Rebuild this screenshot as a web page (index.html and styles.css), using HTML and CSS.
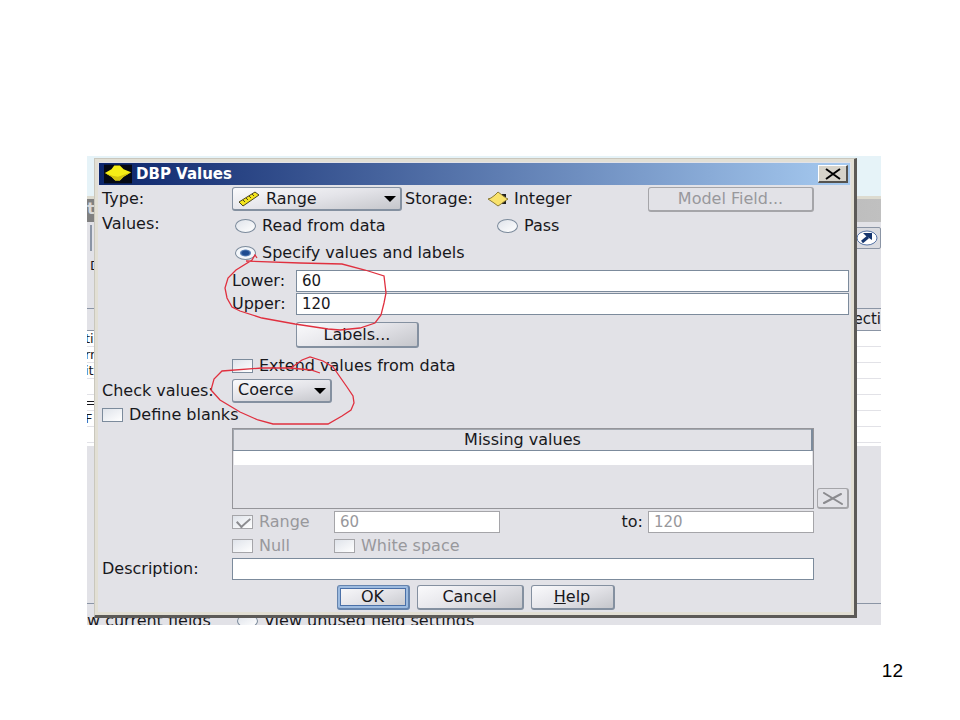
FILE: index.html
```
<!DOCTYPE html>
<html lang="en">

<head>
    <meta charset="UTF-8">
    <meta name="viewport" content="width=device-width, initial-scale=1.0">
    <title>DBP Values</title>
    <link rel="stylesheet" href="styles.css">
</head>

<body>
    <main class="slide">
        <div class="shot">
            <!-- Window behind the dialog -->
            <div class="parent">
                <div class="parent-sky"></div>
                <div class="parent-title"><span>t</span></div>
                <div class="parent-toolbar">
                    <span class="tool-edge"></span>
                    <button class="tool" aria-label="Open">
                        <svg width="24" height="16" viewBox="0 0 24 16">
                            <ellipse cx="11" cy="8" rx="10" ry="7" fill="#fff" stroke="#5573a5" />
                            <path d="M6 12L12 7" fill="none" stroke="#16366f" stroke-width="3" />
                            <path d="M7 3H16V10L13 8L10 6Z" fill="#16366f" />
                        </svg>
                    </button>
                </div>
                <div class="parent-label">D</div>
                <div class="parent-head">ecti</div>
                <div class="parent-rows">
                    <span>ti</span>
                    <span>rr</span>
                    <span>it</span>
                    <span></span>
                    <span>=</span>
                    <span>F</span>
                    <span></span>
                </div>
                <div class="parent-space"></div>
                <div class="parent-view">
                    <span class="parent-current">w current fields</span>
                    <label class="option"><input type="radio" name="view">View unused field settings</label>
                </div>
            </div>

            <section class="dialog">
                <header class="titlebar">
                    <svg class="logo" width="28" height="20" viewBox="0 0 30 20">
                        <rect width="30" height="20" fill="#050914" />
                        <path d="M1 9L8 5L11 1H17L21 5L29 8L21 13L17 17H12L8 13Z" fill="#f5ee16" />
                        <path d="M1 9L9 12L15 13L29 8L21 13L17 17H12L8 13Z" fill="#d3c40e" />
                    </svg>
                    <h1>DBP Values</h1>
                    <button class="close" aria-label="Close">
                        <svg width="18" height="12" viewBox="0 0 18 12">
                            <path d="M2 1L16 11M16 1L2 11" stroke="#000" stroke-width="2" />
                        </svg>
                    </button>
                </header>

                <form class="form">
                    <div class="row row-type">
                        <label class="name" for="type">Type:</label>
                        <div class="select select-type">
                            <svg class="ruler" width="22" height="16" viewBox="0 0 22 16">
                                <path d="M1 11L17 1L21 4L5 15Z" fill="#f4e51b" stroke="#4b4520" />
                                <path d="M5 9l2 2M8 7l2 2M11 5l2 2M14 3l2 2" stroke="#4b4520" />
                            </svg>
                            <select id="type">
                                <option>Range</option>
                            </select>
                            <svg class="arrow" width="12" height="6" viewBox="0 0 12 6"><path d="M0 0H12L6 6Z" /></svg>
                        </div>
                        <span class="storage">Storage:</span>
                        <svg class="diamond" width="22" height="16" viewBox="0 0 22 16">
                            <path d="M15 3h4v3h-4zM15 10h4v3h-4z" fill="#222" />
                            <path d="M1 8L4 7L8 4L11 1L15 4L19 7L21 8L18 10L14 13L11 15L7 12L4 10Z" fill="#f9e36c" stroke="#8b7a35" />
                        </svg>
                        <span>Integer</span>
                        <button type="button" class="btn btn-model" disabled>Model Field...</button>
                    </div>

                    <div class="row row-radio">
                        <span class="name name-values">Values:</span>
                        <label class="option option-read"><input type="radio" name="values">Read from data</label>
                        <label class="option"><input type="radio" name="values">Pass</label>
                    </div>
                    <div class="row row-specify">
                        <label class="option"><input type="radio" name="values" checked>Specify values and labels</label>
                    </div>

                    <div class="row row-bound">
                        <label class="bound" for="lower">Lower:</label>
                        <input class="text" type="text" id="lower" value="60">
                    </div>
                    <div class="row row-bound">
                        <label class="bound" for="upper">Upper:</label>
                        <input class="text" type="text" id="upper" value="120">
                    </div>
                    <div class="row row-labels">
                        <button type="button" class="btn btn-labels">Labels...</button>
                    </div>

                    <div class="row row-extend">
                        <label class="option"><input type="checkbox">Extend values from data</label>
                    </div>
                    <div class="row row-check">
                        <label class="name" for="check">Check values:</label>
                        <div class="select select-check">
                            <select id="check">
                                <option>Coerce</option>
                            </select>
                            <svg class="arrow" width="12" height="6" viewBox="0 0 12 6"><path d="M0 0H12L6 6Z" /></svg>
                        </div>
                    </div>
                    <div class="row row-blanks">
                        <label class="option"><input type="checkbox">Define blanks</label>
                    </div>

                    <div class="row row-missing">
                        <div class="missing">
                            <table>
                                <thead>
                                    <tr><th>Missing values</th></tr>
                                </thead>
                                <tbody>
                                    <tr><td></td></tr>
                                </tbody>
                            </table>
                        </div>
                        <button type="button" class="btn btn-delete" aria-label="Delete" disabled>
                            <svg width="22" height="13" viewBox="0 0 22 13">
                                <path d="M2 1L20 12M19 2L2 11" stroke="#8b8b8f" stroke-width="2" stroke-linecap="round" />
                            </svg>
                        </button>
                    </div>

                    <div class="row row-range">
                        <label class="option option-range disabled"><input type="checkbox" checked disabled>Range</label>
                        <input class="text" type="text" value="60" aria-label="From" disabled>
                        <label class="to" for="rangeTo">to:</label>
                        <input class="text" type="text" id="rangeTo" value="120" disabled>
                    </div>
                    <div class="row row-null">
                        <label class="option option-range disabled"><input type="checkbox" disabled>Null</label>
                        <label class="option disabled"><input type="checkbox" disabled>White space</label>
                    </div>
                    <div class="row row-description">
                        <label class="name" for="description">Description:</label>
                        <input class="text" type="text" id="description">
                    </div>

                    <div class="actions">
                        <button type="button" class="btn btn-ok">OK</button>
                        <button type="button" class="btn btn-cancel">Cancel</button>
                        <button type="button" class="btn btn-help"><u>H</u>elp</button>
                    </div>
                </form>
            </section>

            <!-- Red pen marks -->
            <svg class="marks" width="794" height="469" viewBox="87 156 794 469">
                <path d="M246 261L300 263L342 264L365 270L384 276L386 293L384 303L381 315L375 323L360 328L340 330L328 329L295 324L262 318L240 311L232 307L227 298L225 288L228 278L236 270L252 260L255 255L257 258" />
                <path d="M320 373L311 370L290 368L262 368L222 371L214 379L211 390L220 400L240 412L258 420L273 424L328 424L342 416L351 410L354 403L353 396L347 387L340 377L333 367L323 361L310 357L302 360L291 368" />
            </svg>
        </div>
        <footer class="page-number">12</footer>
    </main>
</body>

</html>
```
FILE: styles.css
```
* {
    box-sizing: border-box;
}

body {
    margin: 0;
    background: #fff;
    color: #18181c;
    font-family: "DejaVu Sans", Verdana, sans-serif;
    font-size: 16px;
    line-height: 20px;
}

.slide {
    padding: 156px 0 0 87px;
}

.shot {
    position: relative;
    display: grid;
    margin-right: 79px;
    overflow: hidden;
}

.parent,
.dialog {
    grid-area: 1 / 1;
    min-width: 0;
}

/* Window behind the dialog */
.parent {
    display: flex;
    flex-direction: column;
    background: #e2e2e7;
}

.parent-sky {
    height: 43px;
    background: #e6f3f8;
    border-bottom: 3px solid #dddbd0;
}

.parent-title {
    height: 23px;
    background: linear-gradient(90deg, #808080, #c0c0c0);
    color: #d8d8d8;
    font-weight: bold;
}

.parent-toolbar {
    display: flex;
    justify-content: space-between;
    align-items: center;
    height: 32px;
}

.tool-edge {
    height: 26px;
    margin-left: 3px;
    border-left: 2px solid #8b95a5;
}

.tool {
    height: 22px;
    padding: 0;
    border: 1px solid #8b95a5;
    border-radius: 2px;
    background: #dadbe0;
}

.tool svg {
    display: block;
}

.parent-label {
    height: 55px;
    padding: 2px 0 0 3px;
    border-bottom: 1px solid #8b95a5;
    font-size: 13px;
}

.parent-head {
    height: 22px;
    border-bottom: 1px solid #8b95a5;
    font-size: 15px;
    text-align: right;
}

.parent-rows {
    display: flex;
    flex-direction: column;
    height: 115px;
    background: #fff;
    font-size: 13px;
    line-height: 15px;
    text-indent: -2px;
}

.parent-rows span {
    height: 16px;
    border-bottom: 1px solid #e2e2e7;
}

.parent-space {
    flex: 1;
    border-bottom: 1px solid #8b95a5;
}

.parent-view {
    display: flex;
    align-items: flex-start;
    height: 21px;
    padding-top: 7px;
}

.parent-current {
    width: 150px;
}

/* Dialog */
.dialog {
    margin: 2px 24px 7px 7px;
    padding: 4px 2px 5px 4px;
    border: 1px solid #c9c7bd;
    border-right: 3px solid #5c5a57;
    border-bottom: 3px solid #5c5a57;
    background: #e2e2e7;
    box-shadow: inset 0 0 0 3px #e2dfd4;
}

.titlebar {
    display: flex;
    align-items: center;
    height: 22px;
    margin-right: 2px;
    padding-right: 2px;
    background: linear-gradient(90deg, #0c256b, #a6caf0);
}

.logo {
    margin: 0 4px 0 5px;
}

.titlebar h1 {
    margin: 0;
    color: #fff;
    font-size: 15px;
}

.close {
    display: flex;
    align-items: center;
    justify-content: center;
    width: 30px;
    height: 18px;
    margin-left: auto;
    padding: 0;
    border: 1px solid #fff;
    border-right: 2px solid #55534f;
    border-bottom: 2px solid #55534f;
    background: #d6d3ca;
}

.form {
    padding: 1px 3px 0;
}

.row {
    display: flex;
    align-items: center;
    white-space: nowrap;
}

.name {
    flex: none;
    width: 130px;
}

.text {
    flex: 1;
    min-width: 0;
    height: 22px;
    padding: 0 5px;
    border: 1px solid #7c8b9c;
    background: #fff;
    color: inherit;
    font: inherit;
    font-size: 15px;
}

.text:disabled {
    border-color: #a5a5a9;
    color: #98989c;
}

.btn {
    height: 25px;
    padding: 0;
    border: 1px solid #8490a0;
    border-right-width: 2px;
    border-bottom-width: 2px;
    border-radius: 3px;
    background: linear-gradient(160deg, #fafafc, #e4e4e9 50%, #c5c6cb);
    color: inherit;
    font: inherit;
}

.btn:disabled {
    border-color: #a5a5a9;
    background: none;
    color: #98989c;
}

/* Drop-downs */
.select {
    position: relative;
}

.select select {
    display: block;
    width: 100%;
    height: 24px;
    padding: 0 5px;
    border: 1px solid #8490a0;
    border-right-width: 2px;
    border-bottom-width: 2px;
    border-radius: 3px;
    background: linear-gradient(170deg, #fafafc, #e4e4e9 50%, #c5c6cb);
    color: inherit;
    font: inherit;
    appearance: none;
}

.arrow {
    position: absolute;
    top: 9px;
    right: 6px;
}

.ruler {
    position: absolute;
    top: 4px;
    left: 6px;
}

.select-type {
    width: 170px;
}

.select-type select {
    padding-left: 33px;
}

.select-check {
    width: 100px;
}

/* Radios and tick boxes */
.option {
    display: flex;
    align-items: center;
    gap: 6px;
}

.option input {
    flex: none;
    width: 21px;
    height: 14px;
    margin: 0;
    border: 1px solid #7c8b9c;
    background: linear-gradient(150deg, #dfe3ea, #fff);
    appearance: none;
}

.option input[type="radio"] {
    border-radius: 50%;
}

.option input[type="radio"]:checked {
    background: radial-gradient(ellipse, #1d4b91 25%, #6d90c0 38%, #f3f6fa 45%);
}

.option input[type="checkbox"]:checked::before {
    content: "";
    display: block;
    width: 11px;
    height: 6px;
    margin: 1px 4px;
    border-left: 2px solid #8b8b8f;
    border-bottom: 2px solid #8b8b8f;
    transform: rotate(-42deg);
}

.option input:disabled {
    border-color: #a5a5a9;
}

.disabled {
    color: #98989c;
}

/* Rows */
.row-type {
    height: 26px;
    padding-right: 35px;
}

.storage {
    width: 85px;
    padding-left: 3px;
}

.diamond {
    flex: none;
    margin-right: 5px;
}

.btn-model {
    width: 166px;
    margin-left: auto;
}

.row-radio {
    height: 28px;
}

.name-values {
    padding-bottom: 4px;
}

.row-radio .option {
    margin-left: 3px;
}

.row-radio .option-read {
    width: 259px;
}

.row-specify {
    height: 26px;
    margin-bottom: 4px;
    padding-left: 133px;
}

.row-bound {
    margin-bottom: 1px;
    padding-left: 130px;
}

.bound {
    width: 64px;
}

.row-labels {
    margin-top: 7px;
    padding-left: 194px;
}

.btn-labels {
    width: 123px;
    height: 26px;
}

.row-extend {
    height: 30px;
    padding: 6px 0 0 130px;
}

.row-check {
    height: 25px;
}

.row-blanks {
    height: 24px;
    margin-bottom: 1px;
}

.row-missing {
    align-items: flex-end;
    gap: 3px;
    padding-left: 130px;
}

.missing {
    flex: 1;
    height: 81px;
    border: 1px solid #95959a;
}

.missing table {
    width: 100%;
    border-collapse: collapse;
}

.missing th {
    height: 21px;
    padding: 0;
    border: 1px solid #a3a8b0;
    border-right: 2px solid #7c8b9c;
    border-bottom: 1px solid #7c8b9c;
    font-weight: normal;
}

.missing td {
    height: 14px;
    padding: 0;
    background: #fff;
}

.btn-delete {
    display: flex;
    align-items: center;
    justify-content: center;
    width: 32px;
    height: 21px;
}

.row-range {
    margin-top: 2px;
    padding: 0 35px 0 130px;
}

.option-range {
    width: 102px;
}

.row-range .text {
    flex: none;
    width: 166px;
}

.to {
    margin: 0 5px 0 auto;
}

.row-null {
    height: 25px;
    padding-left: 130px;
}

.row-description {
    padding-right: 35px;
}

.actions {
    display: flex;
    justify-content: center;
    gap: 7px;
    margin-top: 5px;
}

.btn-ok {
    width: 73px;
    border-color: #6584ae;
    box-shadow: inset 0 0 0 2px #9dbbe0, inset 0 0 0 3px #4a70a8;
}

.btn-cancel {
    width: 107px;
}

.btn-help {
    width: 84px;
}

/* Pen marks lie over the dialog */
.marks {
    position: absolute;
    top: 0;
    left: 0;
    fill: none;
    stroke: #e0303f;
    stroke-width: 1.3;
    pointer-events: none;
}

.page-number {
    margin: 36px 57px 0 0;
    color: #000;
    font: 19px/20px "Liberation Sans", Arial, sans-serif;
    text-align: right;
}
```
